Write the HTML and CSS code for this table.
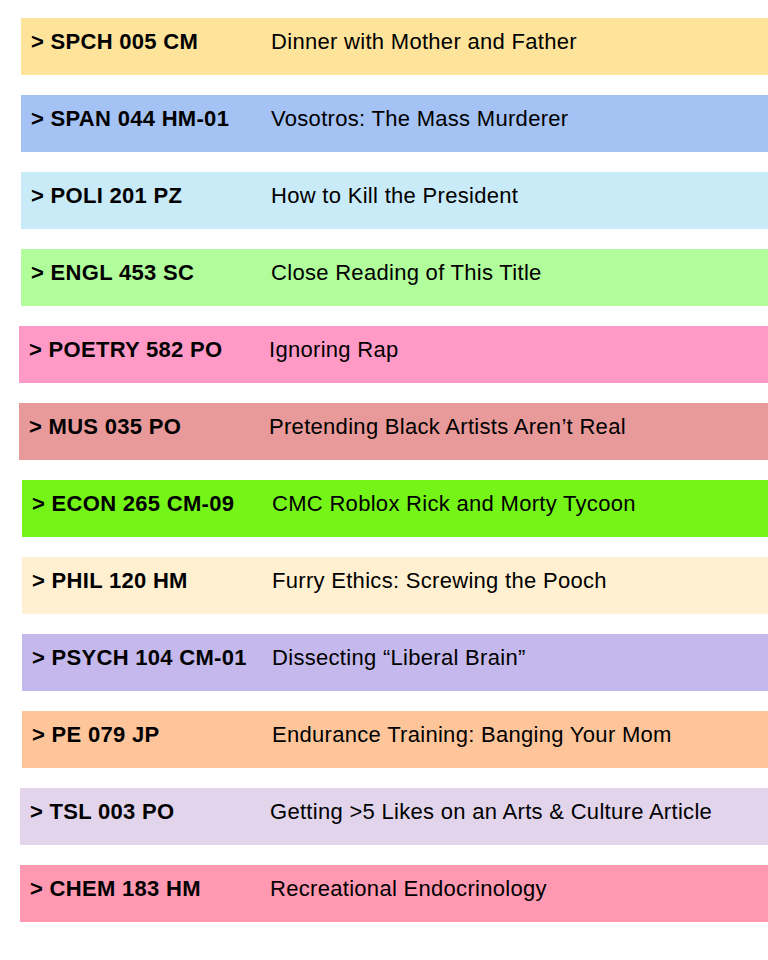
FILE: index.html
```html
<!DOCTYPE html>
<html lang="en">
<head>
<meta charset="utf-8">
<title>Courses</title>
<link rel="stylesheet" href="styles.css">
</head>
<body>
<main class="list">
  <div class="row off21 c1"><span class="code">&gt; SPCH 005 CM</span><span class="title">Dinner with Mother and Father</span></div>
  <div class="row off21 c2"><span class="code">&gt; SPAN 044 HM-01</span><span class="title">Vosotros: The Mass Murderer</span></div>
  <div class="row off21 c3"><span class="code">&gt; POLI 201 PZ</span><span class="title">How to Kill the President</span></div>
  <div class="row off21 c4"><span class="code">&gt; ENGL 453 SC</span><span class="title">Close Reading of This Title</span></div>
  <div class="row off19 c5"><span class="code">&gt; POETRY 582 PO</span><span class="title">Ignoring Rap</span></div>
  <div class="row off19 c6"><span class="code">&gt; MUS 035 PO</span><span class="title">Pretending Black Artists Aren’t Real</span></div>
  <div class="row off22 c7"><span class="code">&gt; ECON 265 CM-09</span><span class="title">CMC Roblox Rick and Morty Tycoon</span></div>
  <div class="row off22 c8"><span class="code">&gt; PHIL 120 HM</span><span class="title">Furry Ethics: Screwing the Pooch</span></div>
  <div class="row off22 c9"><span class="code">&gt; PSYCH 104 CM-01</span><span class="title">Dissecting “Liberal Brain”</span></div>
  <div class="row off22 c10"><span class="code">&gt; PE 079 JP</span><span class="title">Endurance Training: Banging Your Mom</span></div>
  <div class="row off20 c11"><span class="code">&gt; TSL 003 PO</span><span class="title">Getting &gt;5 Likes on an Arts &amp; Culture Article</span></div>
  <div class="row off20 c12"><span class="code">&gt; CHEM 183 HM</span><span class="title">Recreational Endocrinology</span></div>
</main>
</body>
</html>
```
FILE: styles.css
```css
html, body {
  margin: 0;
  padding: 0;
  background: #ffffff;
}
body {
  font-family: "Liberation Sans", Arial, sans-serif;
  color: #000000;
}
.list {
  display: flex;
  flex-direction: column;
  gap: 20px;
  padding-top: 18px;
}
.row {
  display: flex;
  height: 57px;
  box-sizing: border-box;
  padding-top: 11px;
  padding-left: 10px;
  font-size: 22px;
  line-height: 25px;
  letter-spacing: 0.3px;
}
.code {
  flex: 0 0 240px;
  font-weight: bold;
}
.title {
  flex: 1 1 auto;
  white-space: nowrap;
}
.off19 { margin-left: 19px; }
.off20 { margin-left: 20px; }
.off21 { margin-left: 21px; }
.off22 { margin-left: 22px; }
.c1 { background: #fee39b; }
.c2 { background: #a4c2f4; }
.c3 { background: #c9eaf7; }
.c4 { background: #b1fd9b; }
.c5 { background: #ff99c6; }
.c6 { background: #e89999; }
.c7 { background: #75f418; }
.c8 { background: #fff0d1; }
.c9 { background: #c5b8ec; }
.c10 { background: #ffc59a; }
.c11 { background: #e1d4eb; }
.c12 { background: #ff98b1; }
```
